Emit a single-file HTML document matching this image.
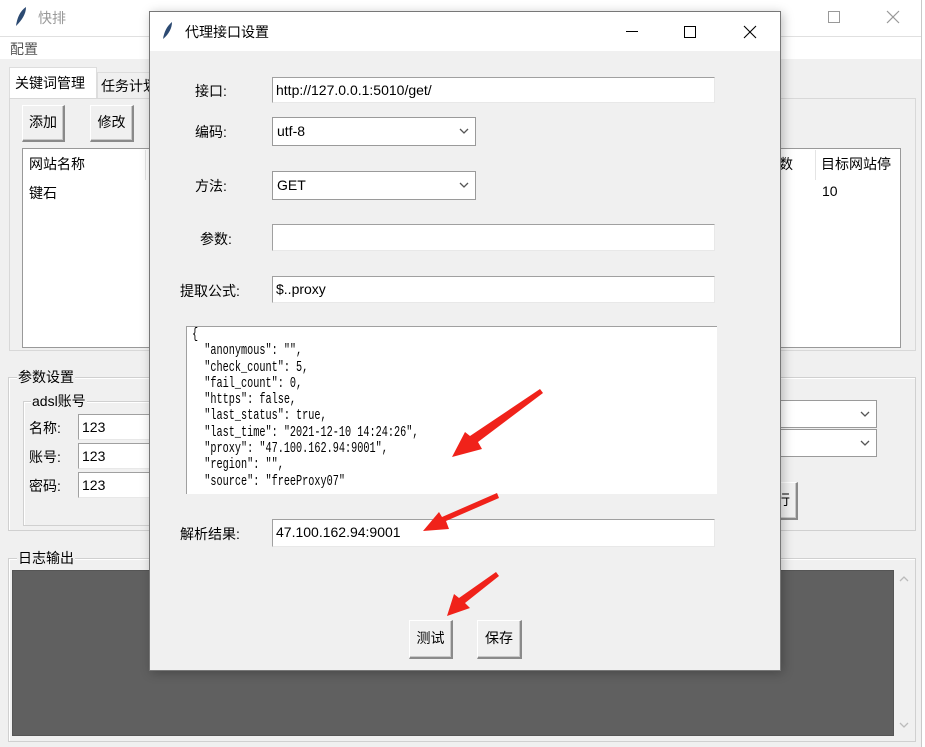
<!DOCTYPE html>
<html><head><meta charset="utf-8"><style>
*{box-sizing:border-box;margin:0;padding:0}
body{width:925px;height:747px;position:relative;overflow:hidden;background:#f0f0f0;font-family:"Liberation Sans","Noto Sans CJK SC",sans-serif;font-size:14px;color:#000}
.a{position:absolute}
.ent{position:absolute;background:#fff;border-top:1px solid #a0a0a0;border-left:1px solid #a0a0a0;border-right:1px solid #e8e8e8;border-bottom:1px solid #e8e8e8;padding:2px 3px;font-size:14px;line-height:20px;white-space:nowrap;overflow:hidden}
.cb{position:absolute;background:#fff;border:1px solid #9a9a9a;padding:3px 4px;font-size:14px;line-height:20px}
.cb svg{position:absolute;right:6px;top:10px}
.btn{position:absolute;background:#f0f0f0;border-top:1px solid #fff;border-left:1px solid #fff;border-right:2px solid #8a8a8a;border-bottom:2px solid #8a8a8a;box-shadow:inset -1px -1px 0 #c8c8c8;text-align:center;font-size:14px}
.grp{position:absolute;border:1px solid #d0d0d0;box-shadow:inset 1px 1px 0 #fff}
.lbl{position:absolute;background:#f0f0f0;font-size:14px;line-height:16px;padding:0 1px}
</style></head><body>
<div class="a" style="left:0;top:0;width:925px;height:36px;background:#fff"></div>
<svg class="a" style="left:14px;top:6px" width="14" height="22" viewBox="0 0 14 22"><path d="M2 20 C3 12 6 5 12 1 C12 8 8 14 2 20Z" fill="#2c4a72"/></svg>
<div class="a" style="left:38px;top:8px;color:#999;font-size:14px">快排</div>
<svg class="a" style="left:828px;top:11px" width="12" height="12"><rect x="0.5" y="0.5" width="11" height="11" fill="none" stroke="#999"/></svg>
<svg class="a" style="left:886px;top:10px" width="14" height="14"><path d="M1 1L13 13M13 1L1 13" stroke="#999" stroke-width="1.2"/></svg>
<div class="a" style="left:0;top:36px;width:921px;height:23px;background:#fff;border-top:1px solid #e0e0e0"></div>
<div class="a" style="left:10px;top:39px;color:#555">配置</div>
<div class="a" style="left:921px;top:0;width:4px;height:747px;background:#fff;border-left:1px solid #c8c8c8"></div>
<div class="a" style="left:9px;top:67px;width:88px;height:32px;background:#fff;border:1px solid #ddd;border-bottom:none"></div>
<div class="a" style="left:15px;top:73px">关键词管理</div>
<div class="a" style="left:97px;top:72px;width:60px;height:27px;background:#f0f0f0;border:1px solid #ddd"></div>
<div class="a" style="left:101px;top:76px">任务计划</div>
<div class="a" style="left:9px;top:98px;width:907px;height:253px;border:1px solid #d8d8d8;background:#f0f0f0"></div>
<div class="btn" style="left:22px;top:105px;width:43px;height:37px;line-height:33px">添加</div>
<div class="btn" style="left:90px;top:105px;width:44px;height:37px;line-height:33px">修改</div>
<div class="a" style="left:22px;top:148px;width:879px;height:200px;background:#fff;border:1px solid #999"></div>
<div class="a" style="left:145px;top:150px;width:1px;height:30px;background:#e4e4e4"></div>
<div class="a" style="left:815px;top:150px;width:1px;height:30px;background:#e4e4e4"></div>
<div class="a" style="left:29px;top:154px">网站名称</div>
<div class="a" style="left:29px;top:183px">键石</div>
<div class="a" style="left:779px;top:154px">数</div>
<div class="a" style="left:821px;top:154px">目标网站停</div>
<div class="a" style="left:822px;top:183px">10</div>
<div class="grp" style="left:8px;top:377px;width:908px;height:154px"></div>
<div class="lbl" style="left:17px;top:369px">参数设置</div>
<div class="grp" style="left:23px;top:401px;width:140px;height:125px"></div>
<div class="lbl" style="left:31px;top:393px">adsl账号</div>
<div class="a" style="left:29px;top:418px">名称:</div>
<div class="a" style="left:29px;top:447px">账号:</div>
<div class="a" style="left:29px;top:476px">密码:</div>
<div class="ent" style="left:78px;top:414px;width:80px;height:26px">123</div>
<div class="ent" style="left:78px;top:443px;width:80px;height:26px">123</div>
<div class="ent" style="left:78px;top:472px;width:80px;height:26px">123</div>
<div class="cb" style="left:760px;top:400px;width:117px;height:28px"><svg width="10" height="6"><path d="M1 1L5 5L9 1" stroke="#555" fill="none" stroke-width="1.3"/></svg></div>
<div class="cb" style="left:760px;top:429px;width:117px;height:28px"><svg width="10" height="6"><path d="M1 1L5 5L9 1" stroke="#555" fill="none" stroke-width="1.3"/></svg></div>
<div class="btn" style="left:760px;top:482px;width:38px;height:38px;line-height:34px;text-align:right;padding-right:6px">行</div>
<div class="grp" style="left:8px;top:558px;width:908px;height:184px"></div>
<div class="lbl" style="left:17px;top:550px">日志输出</div>
<div class="a" style="left:12px;top:570px;width:882px;height:166px;background:#606060;border:1px solid #555"></div>
<svg class="a" style="left:898px;top:575px" width="12" height="8"><path d="M2 6L6 2L10 6" stroke="#bbb" fill="none" stroke-width="1.3"/></svg>
<svg class="a" style="left:898px;top:721px" width="12" height="8"><path d="M2 2L6 6L10 2" stroke="#bbb" fill="none" stroke-width="1.3"/></svg>
<div class="a" style="left:149px;top:11px;width:632px;height:660px;background:#f0f0f0;border:1px solid #777;box-shadow:2px 2px 10px rgba(0,0,0,0.25)"></div>
<div class="a" style="left:150px;top:12px;width:630px;height:39px;background:#fff"></div>
<svg class="a" style="left:162px;top:21px" width="12" height="20" viewBox="0 0 12 20"><path d="M1 18 C2 11 5 5 10 1 C10 7 7 13 1 18Z" fill="#2c4a72"/></svg>
<div class="a" style="left:185px;top:22px">代理接口设置</div>
<div class="a" style="left:626px;top:31px;width:12px;height:1px;background:#000"></div>
<svg class="a" style="left:684px;top:26px" width="12" height="12"><rect x="0.5" y="0.5" width="11" height="11" fill="none" stroke="#000"/></svg>
<svg class="a" style="left:743px;top:25px" width="14" height="14"><path d="M1 1L13 13M13 1L1 13" stroke="#000" stroke-width="1.1"/></svg>
<div class="a" style="left:195px;top:81px">接口:</div>
<div class="ent" style="left:272px;top:77px;width:443px;height:26px">http://127.0.0.1:5010/get/</div>
<div class="a" style="left:195px;top:122px">编码:</div>
<div class="cb" style="left:272px;top:117px;width:204px;height:29px">utf-8<svg width="10" height="6"><path d="M1 1L5 5L9 1" stroke="#555" fill="none" stroke-width="1.3"/></svg></div>
<div class="a" style="left:195px;top:176px">方法:</div>
<div class="cb" style="left:272px;top:171px;width:204px;height:29px">GET<svg width="10" height="6"><path d="M1 1L5 5L9 1" stroke="#555" fill="none" stroke-width="1.3"/></svg></div>
<div class="a" style="left:200px;top:229px">参数:</div>
<div class="ent" style="left:272px;top:224px;width:443px;height:27px"></div>
<div class="a" style="left:180px;top:281px">提取公式:</div>
<div class="ent" style="left:272px;top:276px;width:443px;height:27px">$..proxy</div>
<div class="a" style="left:186px;top:326px;width:531px;height:168px;background:#fff;border-top:1px solid #a0a0a0;border-left:1px solid #a0a0a0;overflow:hidden"></div>
<pre class="a" style="left:192px;top:327px;font-family:'Liberation Mono',monospace;font-size:15px;line-height:16.3px;transform:scaleX(0.68);transform-origin:0 0;color:#000">{
  "anonymous": "",
  "check_count": 5,
  "fail_count": 0,
  "https": false,
  "last_status": true,
  "last_time": "2021-12-10 14:24:26",
  "proxy": "47.100.162.94:9001",
  "region": "",
  "source": "freeProxy07"</pre>
<div class="a" style="left:187px;top:494px;width:531px;height:14px;background:#f0f0f0"></div>
<div class="a" style="left:180px;top:524px">解析结果:</div>
<div class="ent" style="left:272px;top:519px;width:443px;height:28px">47.100.162.94:9001</div>
<div class="btn" style="left:409px;top:620px;width:44px;height:39px;line-height:35px">测试</div>
<div class="btn" style="left:477px;top:620px;width:45px;height:39px;line-height:35px">保存</div>
<svg class="a" style="left:0;top:0" width="925" height="747">
<g fill="#f0221a">
<polygon points="540,389 543,393 478,442 482,449 452,457 465,432 470,436"/>
<polygon points="497,493 499,498 446,521 449,529 423,531 439,512 442,517"/>
<polygon points="496,572 499,576 465,603 470,608 447,616 454,594 459,598"/>
</g></svg>
</body></html>
